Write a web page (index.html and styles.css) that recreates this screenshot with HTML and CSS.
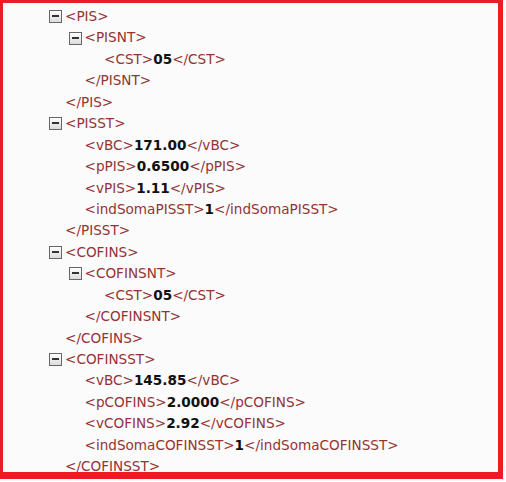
FILE: index.html
```html
<!DOCTYPE html>
<html>
<head>
<meta charset="utf-8">
<link rel="stylesheet" href="styles.css">
</head>
<body>
<div class="frame">
  <div class="tree">
    <div class="el">
      <div class="row"><span class="tog"></span><span class="t">&lt;PIS&gt;</span></div>
      <div class="el">
        <div class="row"><span class="tog"></span><span class="t">&lt;PISNT&gt;</span></div>
        <div class="el leaf"><div class="row"><span class="t">&lt;CST&gt;</span><b>05</b><span class="t">&lt;/CST&gt;</span></div></div>
        <div class="row"><span class="t">&lt;/PISNT&gt;</span></div>
      </div>
      <div class="row"><span class="t">&lt;/PIS&gt;</span></div>
    </div>
    <div class="el">
      <div class="row"><span class="tog"></span><span class="t">&lt;PISST&gt;</span></div>
      <div class="el leaf"><div class="row"><span class="t">&lt;vBC&gt;</span><b>171.00</b><span class="t">&lt;/vBC&gt;</span></div></div>
      <div class="el leaf"><div class="row"><span class="t">&lt;pPIS&gt;</span><b>0.6500</b><span class="t">&lt;/pPIS&gt;</span></div></div>
      <div class="el leaf"><div class="row"><span class="t">&lt;vPIS&gt;</span><b>1.11</b><span class="t">&lt;/vPIS&gt;</span></div></div>
      <div class="el leaf"><div class="row"><span class="t">&lt;indSomaPISST&gt;</span><b>1</b><span class="t">&lt;/indSomaPISST&gt;</span></div></div>
      <div class="row"><span class="t">&lt;/PISST&gt;</span></div>
    </div>
    <div class="el">
      <div class="row"><span class="tog"></span><span class="t">&lt;COFINS&gt;</span></div>
      <div class="el">
        <div class="row"><span class="tog"></span><span class="t">&lt;COFINSNT&gt;</span></div>
        <div class="el leaf"><div class="row"><span class="t">&lt;CST&gt;</span><b>05</b><span class="t">&lt;/CST&gt;</span></div></div>
        <div class="row"><span class="t">&lt;/COFINSNT&gt;</span></div>
      </div>
      <div class="row"><span class="t">&lt;/COFINS&gt;</span></div>
    </div>
    <div class="el">
      <div class="row"><span class="tog"></span><span class="t">&lt;COFINSST&gt;</span></div>
      <div class="el leaf"><div class="row"><span class="t">&lt;vBC&gt;</span><b>145.85</b><span class="t">&lt;/vBC&gt;</span></div></div>
      <div class="el leaf"><div class="row"><span class="t">&lt;pCOFINS&gt;</span><b>2.0000</b><span class="t">&lt;/pCOFINS&gt;</span></div></div>
      <div class="el leaf"><div class="row"><span class="t">&lt;vCOFINS&gt;</span><b>2.92</b><span class="t">&lt;/vCOFINS&gt;</span></div></div>
      <div class="el leaf"><div class="row"><span class="t">&lt;indSomaCOFINSST&gt;</span><b>1</b><span class="t">&lt;/indSomaCOFINSST&gt;</span></div></div>
      <div class="row"><span class="t">&lt;/COFINSST&gt;</span></div>
    </div>
  </div>
</div>
</body>
</html>
```

FILE: styles.css
```css
html, body {
  margin: 0;
  padding: 0;
  background: #ffffff;
}
.frame {
  width: 495px;
  height: 469px;
  border-style: solid;
  border-color: #ec1c24;
  border-width: 3px 5px 7px 3px;
  background: #fbfbfb;
  overflow: hidden;
}
.tree {
  padding: 3px 0 0 62px;
  font-family: "DejaVu Sans", sans-serif;
  font-size: 13.6px;
  color: #933333;
}
.el .el {
  margin-left: 19.5px;
}
.row {
  height: 21.45px;
  line-height: 21.45px;
  white-space: nowrap;
  display: flex;
  align-items: center;
}
.tog {
  flex: none;
  width: 11px;
  height: 11px;
  margin-left: -16px;
  margin-right: 3px;
  border: 1px solid #666666;
  background: linear-gradient(#ffffff, #dcdcdc);
  position: relative;
}
.tog::after {
  content: "";
  position: absolute;
  left: 2px;
  top: 4px;
  width: 7px;
  height: 2px;
  background: #333;
}
.row b {
  color: #111;
  font-weight: bold;
}
```
